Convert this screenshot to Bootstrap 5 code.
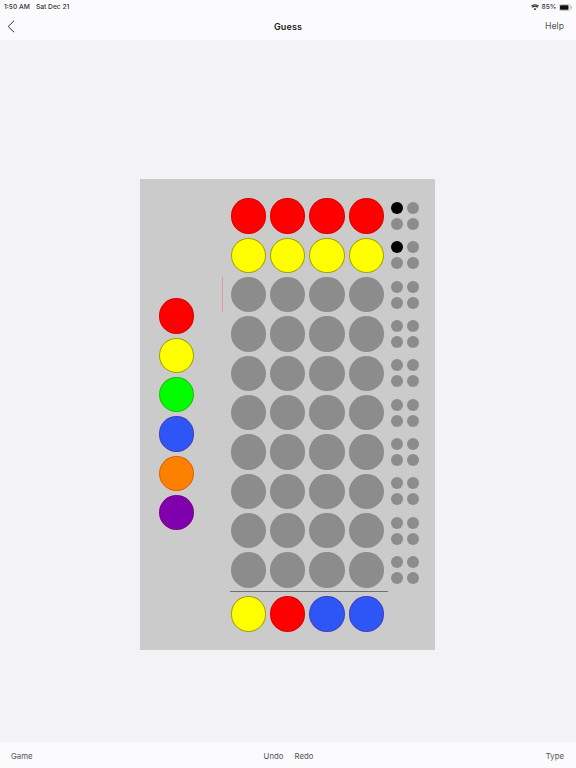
<!DOCTYPE html>
<html lang="en">
<head>
<meta charset="utf-8">
<title>Guess</title>
<link rel="stylesheet" href="https://cdn.jsdelivr.net/npm/bootstrap@5.3.0/dist/css/bootstrap.min.css">
<style>
html,body{height:100%}
body{background:#f2f2f7;font-family:Inter,"Liberation Sans",sans-serif;color:#2b2b2b;width:576px;height:768px;overflow:hidden}
.shell{height:768px}
.topbar{height:40px;background:#fbfbfd;position:relative}
.statusline{height:13px;padding:1px 4px 0 4px;font-size:6.7px;line-height:12px;color:#333;font-weight:500}
.statusline .gapper{gap:6px}
.statusright{gap:2.500px}
.navline{height:27px;padding:0 12px 0 7px}
.navtitle{font-size:9px;font-weight:600;color:#222;letter-spacing:.15px}
.navlink{font-size:8.7px;color:#555}
.stage{flex:1 1 auto;padding-top:139.3px;padding-right:1px}
.panel{width:295px;height:470.7px;background:#cbcbcb;padding:19px 0 0 19px;position:relative}
.palette{width:35.33px;margin-top:100px;gap:4px;margin-right:36.2px}
.board{gap:4px}
.gridrow{gap:4px}
.ball{width:35.33px;height:35.33px;border-radius:50%;flex:none;background:#8c8c8c}
.edge{border:1px solid rgba(90,90,0,.55)}
.edge-soft{border:1px solid rgba(120,0,0,.25)}
.c-red{background:#fe0000}
.c-yellow{background:#ffff00}
.c-green{background:#00fe00}
.c-blue{background:#2e55f6}
.c-orange{background:#fe8000}
.c-purple{background:#8000ae}
.pegs{width:28px;height:28px;margin-left:3px;display:grid;grid-template-columns:12px 12px;gap:4px;align-self:center}
.peg{width:12px;height:12px;border-radius:50%;background:#8c8c8c}
.peg-black{background:#000}
.rule{width:158px;height:1px;background:#6f6f6f;margin-left:-.5px}
.rulewrap{height:8.7px;margin:-4px 0;display:flex;align-items:center}
.marker{position:absolute;left:81.5px;top:97.5px;width:1px;height:35px;background:#e59a9a}
.bottombar{height:26px;background:#fbfbfd;padding:3px 12px 0 11px;font-size:7.8px;color:#555}
.midlinks{gap:11px;margin-left:.5px}
</style>
</head>
<body>
<div class="shell d-flex flex-column">
  <header class="topbar">
    <div class="statusline d-flex justify-content-between align-items-center">
      <div class="d-flex gapper"><span>1:50 AM</span><span>Sat Dec 21</span></div>
      <div class="d-flex align-items-center statusright">
        <svg width="8" height="6.5" viewBox="0 0 18 14"><path fill="#222" d="M9 14 6 10.6a4.6 4.6 0 0 1 6 0zM3.9 8.3 2 6.2a10.500 10.500 0 0 1 14 0l-1.900 2.100a7.600 7.600 0 0 0-10.200 0zM1.500 5.500 0 3.800a13.400 13.400 0 0 1 18 0l-1.500 1.700a11.200 11.200 0 0 0-15 0z"/></svg>
        <span>85%</span>
        <svg width="13" height="7" viewBox="0 0 26 14"><rect x=".5" y="1" width="22" height="12" rx="3" fill="none" stroke="#999"/><rect x="2" y="2.500" width="17" height="9" rx="1.500" fill="#111"/><rect x="23.500" y="5" width="2" height="4" rx="1" fill="#999"/></svg>
      </div>
    </div>
    <div class="navline d-flex justify-content-between align-items-center position-relative">
      <svg width="8" height="13" viewBox="0 0 8 13"><path d="M7 .8 1.200 6.500 7 12.200" fill="none" stroke="#333" stroke-width="1"/></svg>
      <span class="navtitle position-absolute start-50 translate-middle-x">Guess</span>
      <span class="navlink">Help</span>
    </div>
  </header>

  <main class="stage d-flex justify-content-center">
    <section class="panel d-flex align-items-start">
      <div class="palette d-flex flex-column">
        <div class="ball c-red edge-soft"></div>
        <div class="ball c-yellow edge"></div>
        <div class="ball c-green edge-soft"></div>
        <div class="ball c-blue edge-soft"></div>
        <div class="ball c-orange edge-soft"></div>
        <div class="ball c-purple edge-soft"></div>
      </div>
      <div class="marker"></div>
      <div class="board d-flex flex-column">
        <div class="gridrow d-flex"><div class="ball c-red edge-soft"></div><div class="ball c-red edge-soft"></div><div class="ball c-red edge-soft"></div><div class="ball c-red edge-soft"></div><div class="pegs"><div class="peg peg-black"></div><div class="peg"></div><div class="peg"></div><div class="peg"></div></div></div>
        <div class="gridrow d-flex"><div class="ball c-yellow edge"></div><div class="ball c-yellow edge"></div><div class="ball c-yellow edge"></div><div class="ball c-yellow edge"></div><div class="pegs"><div class="peg peg-black"></div><div class="peg"></div><div class="peg"></div><div class="peg"></div></div></div>
        <div class="gridrow d-flex"><div class="ball"></div><div class="ball"></div><div class="ball"></div><div class="ball"></div><div class="pegs"><div class="peg"></div><div class="peg"></div><div class="peg"></div><div class="peg"></div></div></div>
        <div class="gridrow d-flex"><div class="ball"></div><div class="ball"></div><div class="ball"></div><div class="ball"></div><div class="pegs"><div class="peg"></div><div class="peg"></div><div class="peg"></div><div class="peg"></div></div></div>
        <div class="gridrow d-flex"><div class="ball"></div><div class="ball"></div><div class="ball"></div><div class="ball"></div><div class="pegs"><div class="peg"></div><div class="peg"></div><div class="peg"></div><div class="peg"></div></div></div>
        <div class="gridrow d-flex"><div class="ball"></div><div class="ball"></div><div class="ball"></div><div class="ball"></div><div class="pegs"><div class="peg"></div><div class="peg"></div><div class="peg"></div><div class="peg"></div></div></div>
        <div class="gridrow d-flex"><div class="ball"></div><div class="ball"></div><div class="ball"></div><div class="ball"></div><div class="pegs"><div class="peg"></div><div class="peg"></div><div class="peg"></div><div class="peg"></div></div></div>
        <div class="gridrow d-flex"><div class="ball"></div><div class="ball"></div><div class="ball"></div><div class="ball"></div><div class="pegs"><div class="peg"></div><div class="peg"></div><div class="peg"></div><div class="peg"></div></div></div>
        <div class="gridrow d-flex"><div class="ball"></div><div class="ball"></div><div class="ball"></div><div class="ball"></div><div class="pegs"><div class="peg"></div><div class="peg"></div><div class="peg"></div><div class="peg"></div></div></div>
        <div class="gridrow d-flex"><div class="ball"></div><div class="ball"></div><div class="ball"></div><div class="ball"></div><div class="pegs"><div class="peg"></div><div class="peg"></div><div class="peg"></div><div class="peg"></div></div></div>
        <div class="rulewrap"><div class="rule"></div></div>
        <div class="gridrow d-flex"><div class="ball c-yellow edge"></div><div class="ball c-red edge-soft"></div><div class="ball c-blue edge-soft"></div><div class="ball c-blue edge-soft"></div></div>
      </div>
    </section>
  </main>

  <footer class="bottombar d-flex justify-content-between align-items-center position-relative">
    <span>Game</span>
    <div class="d-flex midlinks position-absolute start-50 translate-middle-x"><span>Undo</span><span>Redo</span></div>
    <span>Type</span>
  </footer>
</div>
</body>
</html>
